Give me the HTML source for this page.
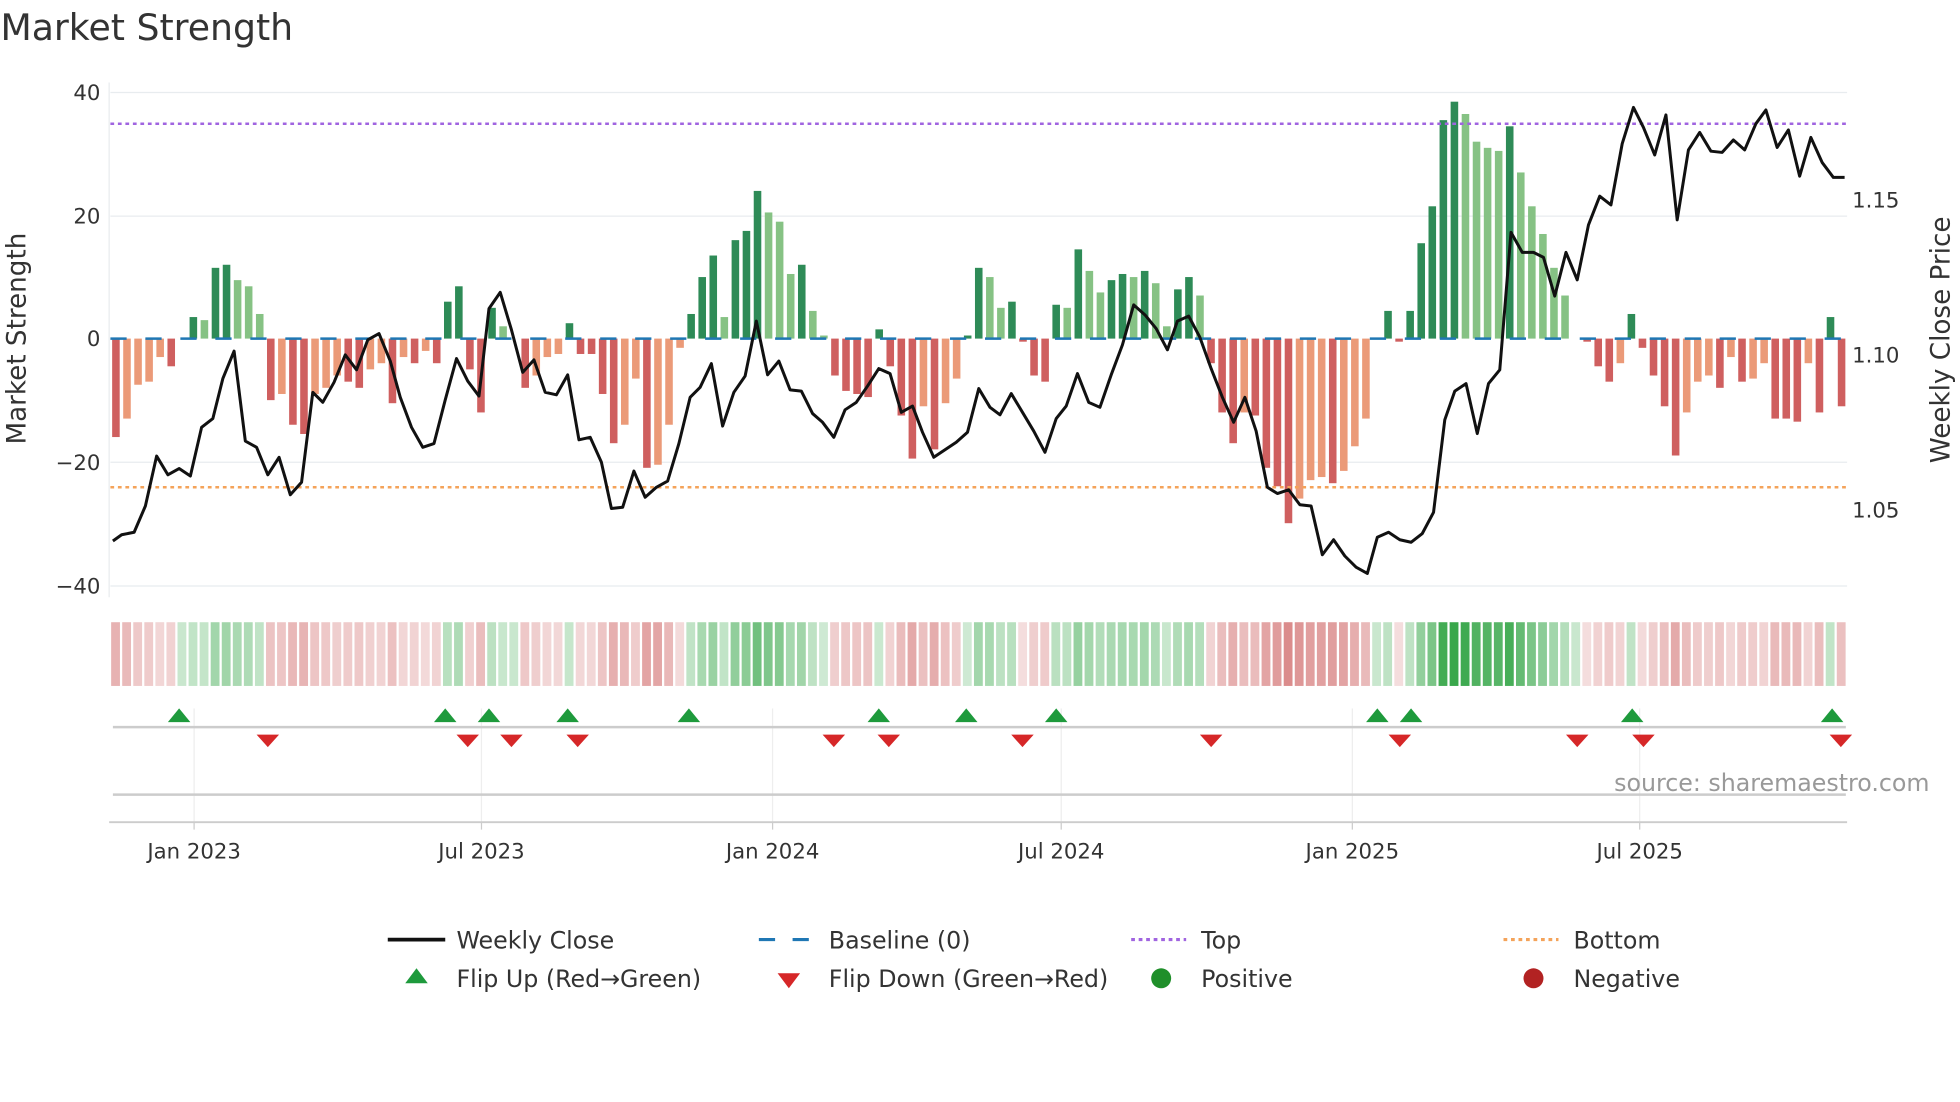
<!DOCTYPE html>
<html><head><meta charset="utf-8"><style>
html,body{margin:0;padding:0;background:#fff;width:1960px;height:1102px;overflow:hidden}
svg{display:block}
text{font-family:"DejaVu Sans","Liberation Sans",sans-serif;fill:#333}
</style></head><body>
<svg id="s" width="1960" height="1102" viewBox="0 0 1568 882" xmlns="http://www.w3.org/2000/svg">
<rect width="1568" height="882" fill="#fff"/>
<text x="0" y="32" font-size="29" fill="#333">Market Strength</text>
<g stroke="#e8ecef" stroke-width="1">
<line x1="88" y1="74" x2="1478" y2="74"/><line x1="88" y1="173" x2="1478" y2="173"/>
<line x1="88" y1="370" x2="1478" y2="370"/><line x1="88" y1="469" x2="1478" y2="469"/>
<line x1="87" y1="66" x2="87" y2="478"/>
</g>
<g font-size="17" text-anchor="end">
<text x="80" y="80">40</text><text x="80" y="179">20</text><text x="80" y="277">0</text>
<text x="80" y="376">−20</text><text x="80" y="475">−40</text>
</g>
<g font-size="17"><text x="1482" y="166">1.15</text><text x="1482" y="290">1.10</text><text x="1482" y="414">1.05</text></g>
<text font-size="21" transform="translate(20,271) rotate(-90)" text-anchor="middle">Market Strength</text>
<text font-size="21" transform="translate(1560,272) rotate(-90)" text-anchor="middle">Weekly Close Price</text>
<g id="bars"></g>
<line x1="88" y1="99" x2="1478" y2="99" stroke="#a064e0" stroke-width="2" stroke-dasharray="3,3"/>
<line x1="88" y1="390" x2="1478" y2="390" stroke="#f4a35a" stroke-width="2" stroke-dasharray="3,3"/>
<line x1="88" y1="271" x2="1478" y2="271" stroke="#1f77b4" stroke-width="2" stroke-dasharray="13,15"/>
<polyline id="price" fill="none" stroke="#111" stroke-width="2.4" stroke-linejoin="round"/>
<g id="strip"></g>
<g stroke="#eee" stroke-width="1">
<line x1="155" y1="567" x2="155" y2="658"/><line x1="385" y1="567" x2="385" y2="658"/>
<line x1="618" y1="567" x2="618" y2="658"/><line x1="849" y1="567" x2="849" y2="658"/>
<line x1="1082" y1="567" x2="1082" y2="658"/><line x1="1312" y1="567" x2="1312" y2="658"/>
</g>
<line x1="90" y1="582" x2="1477" y2="582" stroke="#ccc" stroke-width="2"/>
<line x1="90" y1="636" x2="1477" y2="636" stroke="#ccc" stroke-width="2"/>
<line x1="87" y1="658" x2="1478" y2="658" stroke="#ccc" stroke-width="1.5"/>
<g id="marks"></g>
<text x="1544" y="633" font-size="19" text-anchor="end" fill="#999" style="fill:#999">source: sharemaestro.com</text>
<g stroke="#ccc"><line x1="155" y1="658" x2="155" y2="664"/><line x1="385" y1="658" x2="385" y2="664"/><line x1="618" y1="658" x2="618" y2="664"/><line x1="849" y1="658" x2="849" y2="664"/><line x1="1082" y1="658" x2="1082" y2="664"/><line x1="1312" y1="658" x2="1312" y2="664"/></g>
<g font-size="17" text-anchor="middle">
<text x="155" y="687">Jan 2023</text><text x="385" y="687">Jul 2023</text><text x="618" y="687">Jan 2024</text>
<text x="849" y="687">Jul 2024</text><text x="1082" y="687">Jan 2025</text><text x="1312" y="687">Jul 2025</text>
</g>
<g font-size="19">
<line x1="310" y1="752" x2="356" y2="752" stroke="#111" stroke-width="3"/><text x="365" y="759">Weekly Close</text>
<line x1="607" y1="752" x2="651" y2="752" stroke="#1f77b4" stroke-width="2.5" stroke-dasharray="13,14"/><text x="663" y="759">Baseline (0)</text>
<line x1="905" y1="752" x2="949" y2="752" stroke="#a064e0" stroke-width="2.5" stroke-dasharray="3,3"/><text x="961" y="759">Top</text>
<line x1="1203" y1="752" x2="1247" y2="752" stroke="#f4a35a" stroke-width="2.5" stroke-dasharray="3,3"/><text x="1259" y="759">Bottom</text>
<polygon points="333,775 342,787 324,787" fill="#1e9a3c"/><text x="365" y="790">Flip Up (Red→Green)</text>
<polygon points="622,779 640,779 631,791" fill="#d62728"/><text x="663" y="790">Flip Down (Green→Red)</text>
<circle cx="929" cy="783" r="8" fill="#1f8f2a"/><text x="961" y="790">Positive</text>
<circle cx="1227" cy="783" r="8" fill="#b22222"/><text x="1259" y="790">Negative</text>
</g>
</svg>
<script>
var V=[-16,-13,-7.5,-7,-3,-4.5,0,3.5,3,11.5,12,9.5,8.5,4,-10,-9,-14,-15.5,-9,-8,-6,-7,-8,-5,-4,-10.5,-3,-4,-2,-4,6,8.5,-5,-12,5,2,0,-8,-6,-3,-2.5,2.5,-2.5,-2.5,-9,-17,-14,-6.5,-21,-20.5,-14,-1.5,4,10,13.5,3.5,16,17.5,24,20.5,19,10.5,12,4.5,0.5,-6,-8.5,-9,-9.5,1.5,-4.5,-12.5,-19.5,-11,-18,-10.5,-6.5,0.5,11.5,10,5,6,-0.5,-6,-7,5.5,5,14.5,11,7.5,9.5,10.5,10,11,9,2,8,10,7,-4,-12,-17,-12,-12.5,-21,-24,-30,-26,-23,-22.5,-23.5,-21.5,-17.5,-13,0,4.5,-0.5,4.5,15.5,21.5,35.5,38.5,36.5,32,31,30.5,34.5,27,21.5,17,11.5,7,0,-0.5,-4.5,-7,-4,4,-1.5,-6,-11,-19,-12,-7,-6,-8,-3,-7,-6.5,-4,-13,-13,-13.5,-4,-12,3.5,-11];
var P=[90,433,97,428,107,426,116,405,125,365,134,380,143,375,152,381,161,342,170,335,178,303,187,281,196,353,205,358,214,380,223,366,232,396,241,386,250,314,258,322,267,306,276,284,285,296,294,272,303,267,312,289,320,318,329,342,338,358,347,355,356,320,365,287,374,305,383,317,391,247,400,234,409,264,418,298,427,288,436,314,445,316,454,300,463,352,472,350,481,370,489,407,498,406,507,377,516,398,525,390,534,385,543,355,552,318,560,310,569,291,578,341,587,314,596,301,605,257,614,300,623,289,632,312,641,313,650,331,658,338,667,350,676,328,685,322,694,309,703,295,712,299,721,330,730,325,738,346,747,366,756,360,765,354,774,346,783,311,792,326,800,332,809,315,818,330,827,345,836,362,845,335,853,325,862,299,871,322,880,326,889,300,898,276,907,244,916,252,925,263,934,280,942,257,951,253,960,270,969,295,978,318,987,338,996,318,1005,345,1014,390,1022,395,1031,392,1040,404,1049,405,1058,444,1067,432,1076,445,1085,454,1094,459,1102,430,1111,426,1120,432,1129,434,1138,427,1147,410,1156,336,1164,313,1173,307,1182,347,1191,307,1200,296,1209,186,1218,202,1227,202,1235,206,1244,237,1253,202,1262,224,1271,180,1280,157,1289,164,1298,115,1307,86,1315,102,1324,124,1333,92,1342,176,1351,120,1360,106,1369,121,1378,122,1387,112,1396,120,1405,99,1413,88,1422,118,1431,104,1440,141,1449,110,1458,130,1467,142,1476,142];
var NS="http://www.w3.org/2000/svg";
function el(t,a,p){var e=document.createElementNS(NS,t);for(var k in a)e.setAttribute(k,a[k]);document.getElementById(p).appendChild(e);return e;}
var n=V.length,x0=88,w=(1478-88)/n;
for(var i=0;i<n;i++){var v=V[i],pv=i?V[i-1]:0,x=x0+i*w;
 var strong=(Math.abs(v)>=Math.abs(pv))||(v*pv<=0);
 var c=v>0?(strong?"#2e8b57":"#86c284"):(strong?"#cf5f5f":"#eb9a78");
 if(v!=0){var h=Math.abs(v)*4.925;el("rect",{x:x+1.4,y:v>0?271-h:271,width:w-2.8,height:h,fill:c},"bars");}
 var a=0.22+0.7*Math.min(Math.abs(v),38)/38;
 var sc=v>0?"rgba(40,160,60,"+a+")":(v<0?"rgba(200,80,80,"+(a*0.85)+")":"rgba(40,160,60,0.25)");
 el("rect",{x:x+0.6,y:498,width:w-1.8,height:51,fill:sc},"strip");}
var pts=[];for(var j=0;j<P.length;j+=2)pts.push(P[j]+","+P[j+1]);
document.getElementById("price").setAttribute("points",pts.join(" "));
[143,356,391,454,551,703,773,845,1102,1129,1306,1466].forEach(function(x){el("polygon",{points:(x)+",567 "+(x+9)+",578 "+(x-9)+",578",fill:"#1e9a3c"},"marks");});
[214,374,409,462,667,711,818,969,1120,1262,1315,1473].forEach(function(x){el("polygon",{points:(x-9)+",588 "+(x+9)+",588 "+x+",598",fill:"#d62728"},"marks");});
</script>
</body></html>
